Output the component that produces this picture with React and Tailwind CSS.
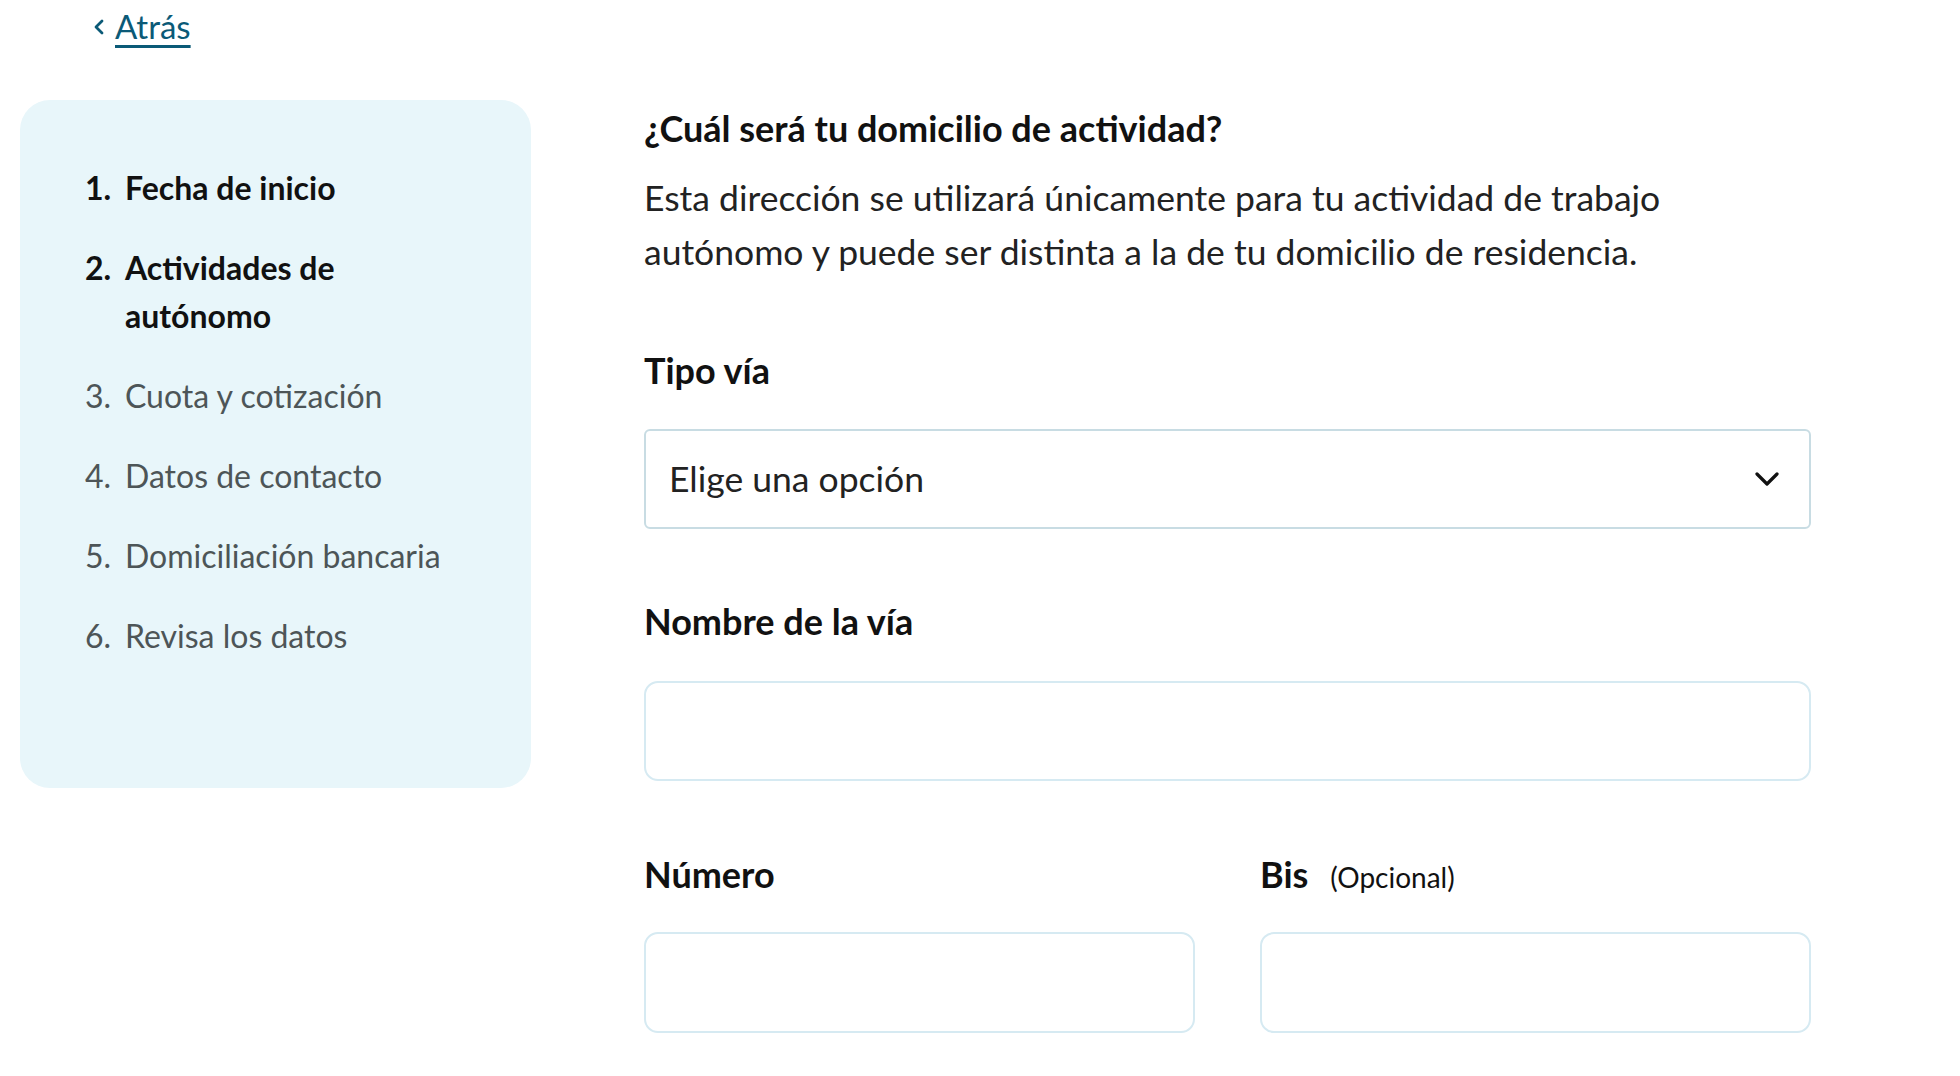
import React from "react";

const steps = [
  { n: "1.", label: "Fecha de inicio", active: true },
  { n: "2.", label: "Actividades de autónomo", active: true },
  { n: "3.", label: "Cuota y cotización", active: false },
  { n: "4.", label: "Datos de contacto", active: false },
  { n: "5.", label: "Domiciliación bancaria", active: false },
  { n: "6.", label: "Revisa los datos", active: false },
];

function Chevron() {
  return (
    <svg width="24" height="14" viewBox="0 0 24 14" fill="none">
      <path d="M2 2l10 10 10-10" stroke="#111" strokeWidth="3.2" strokeLinecap="round" strokeLinejoin="round" />
    </svg>
  );
}

export default function App() {
  return (
    <div className="min-h-screen w-full bg-white text-[#111] font-['Lato','Liberation_Sans',sans-serif]">
      <div className="h-[100px] pl-[93px] pt-[6px]">
        <a href="#" className="inline-flex items-center gap-[9px] text-[#0b5a77]">
          <svg width="13" height="18" viewBox="0 0 13 18" fill="none" className="mt-[2px]">
            <path d="M9 3L3 9l6 6" stroke="#0b5a77" strokeWidth="2.8" strokeLinecap="round" strokeLinejoin="round" />
          </svg>
          <span className="text-[33px] leading-[40px] underline decoration-[3px] underline-offset-[6px]">Atrás</span>
        </a>
      </div>
      <div className="flex">
        <aside className="ml-[20px] w-[511px] h-[688px] shrink-0 rounded-[30px] bg-[#e8f6fa] pl-[65px] pt-[64px]">
          <ol className="flex flex-col gap-[32px]">
            {steps.map((s) => (
              <li
                key={s.n}
                className={
                  "flex text-[32px] leading-[48px] " +
                  (s.active ? "font-bold text-[#111]" : "font-normal text-[#4d5557]")
                }
              >
                <span className="w-[40px] shrink-0">{s.n}</span>
                <span className="w-[340px]">{s.label}</span>
              </li>
            ))}
          </ol>
        </aside>
        <main className="ml-[113px] w-[1167px] pt-[8px]">
          <h1 className="text-[36px] leading-[40px] font-bold">¿Cuál será tu domicilio de actividad?</h1>
          <p className="mt-[23px] text-[35.5px] leading-[54px] text-[#222]">
            Esta dirección se utilizará únicamente para tu actividad de trabajo autónomo y puede ser distinta a la de tu domicilio de residencia.
          </p>
          <div className="mt-[71px] flex flex-col gap-[39px]">
            <label className="text-[36px] leading-[40px] font-bold">Tipo vía</label>
            <div className="flex h-[100px] items-center justify-between rounded-[6px] border-2 border-[#c8dce3] pl-[23px] pr-[30px]">
              <span className="text-[35.5px] text-[#222]">Elige una opción</span>
              <Chevron />
            </div>
          </div>
          <div className="mt-[72px] flex flex-col gap-[40px]">
            <label className="text-[36px] leading-[40px] font-bold">Nombre de la vía</label>
            <div className="h-[100px] rounded-[14px] border-2 border-[#d6eaf2]" />
          </div>
          <div className="mt-[73px] grid grid-cols-2 gap-[65px]">
            <div className="flex flex-col gap-[38px]">
              <label className="h-[40px] text-[36px] leading-[40px] font-bold">Número</label>
              <div className="h-[101px] rounded-[14px] border-2 border-[#d6eaf2]" />
            </div>
            <div className="flex flex-col gap-[38px]">
              <label className="flex h-[40px] items-baseline gap-[22px] text-[36px] leading-[40px] font-bold">
                Bis <span className="text-[28px] font-normal text-[#111]">(Opcional)</span>
              </label>
              <div className="h-[101px] rounded-[14px] border-2 border-[#d6eaf2]" />
            </div>
          </div>
        </main>
      </div>
    </div>
  );
}
